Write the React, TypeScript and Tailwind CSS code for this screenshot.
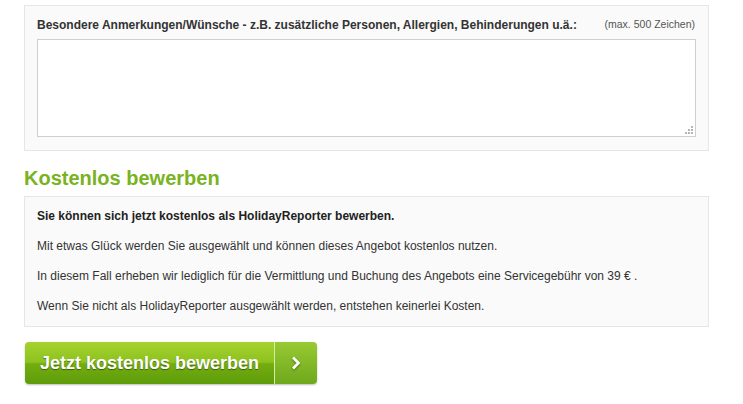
import React from "react";

const Dots = () => (
  <div className="pointer-events-none absolute bottom-[3px] right-[3px] grid grid-cols-3 gap-[1px]">
    {[0, 0, 1, 0, 1, 1, 1, 1, 1].map((on, i) => (
      <span
        key={i}
        className={on ? "h-[2px] w-[2px] bg-[#b5b5b5]" : "h-[2px] w-[2px]"}
      />
    ))}
  </div>
);

export default function App() {
  return (
    <div className="min-h-[404px] w-[743px] bg-white font-['Liberation_Sans',Arial,sans-serif] text-[#333]">
      <div className="ml-[24px] w-[685px] pt-[5px]">
        <div className="border border-[#e6e6e6] bg-[#fafafa] px-[12px] pt-[10px] pb-[13px]">
          <div className="flex items-baseline justify-between pr-[1px]">
            <label className="text-[12px] font-bold leading-[18px] text-[#333]">
              Besondere Anmerkungen/Wünsche - z.B. zusätzliche Personen, Allergien, Behinderungen u.ä.:
            </label>
            <span className="relative -top-[1px] text-[10.5px] leading-[18px] text-[#555]">(max. 500 Zeichen)</span>
          </div>
          <div className="relative mt-[5px]">
            <textarea className="block h-[98px] w-full resize-none border border-[#cfcfcf] bg-white outline-none" />
            <Dots />
          </div>
        </div>

        <h2 className="mt-[15px] mb-[6px] text-[20px] font-bold leading-[24px] text-[#79b31f]">
          Kostenlos bewerben
        </h2>

        <div className="border border-[#e6e6e6] bg-[#fafafa] px-[12px] pt-[10px] pb-[11px] text-[12px] leading-[18px]">
          <p className="font-bold text-[#222]">Sie können sich jetzt kostenlos als HolidayReporter bewerben.</p>
          <p className="mt-[12px]">Mit etwas Glück werden Sie ausgewählt und können dieses Angebot kostenlos nutzen.</p>
          <p className="mt-[12px]">
            In diesem Fall erheben wir lediglich für die Vermittlung und Buchung des Angebots eine Servicegebühr von 39 € .
          </p>
          <p className="mt-[12px]">Wenn Sie nicht als HolidayReporter ausgewählt werden, entstehen keinerlei Kosten.</p>
        </div>

        <button className="mt-[15px] ml-[1px] flex h-[42px] overflow-hidden rounded-[4px] shadow-[0_1px_2px_rgba(0,0,0,0.25)]">
          <span className="flex h-full w-[249px] items-center bg-[linear-gradient(#a6d22f_0%,#8dc21f_48%,#74ad10_52%,#5e9c0b_100%)] pl-[15px] text-[18px] font-bold text-white [text-shadow:0_1px_1px_rgba(0,0,0,0.45)]">
            Jetzt kostenlos bewerben
          </span>
          <span className="h-full w-[1px] bg-[#d5eca0]" />
          <span className="flex h-full w-[42px] items-center justify-center bg-[linear-gradient(#98ca33,#6ea81c)]">
            <svg width="10" height="14" viewBox="0 0 10 14" className="drop-shadow-[0_1px_1px_rgba(0,0,0,0.4)]">
              <path d="M2 1.5 L7.5 7 L2 12.5" fill="none" stroke="#fff" strokeWidth="2.6" />
            </svg>
          </span>
        </button>
      </div>
    </div>
  );
}
